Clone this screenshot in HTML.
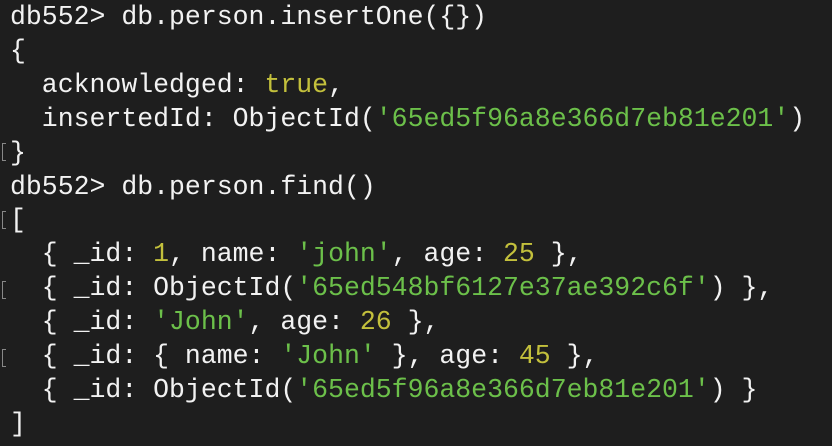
<!DOCTYPE html>
<html><head><style>
html,body{margin:0;padding:0;background:#1e1e1e;width:832px;height:446px;overflow:hidden}
pre{margin:0;position:absolute;left:10px;top:1px;font-family:"Liberation Mono",monospace;font-size:26.5px;line-height:33.9px;color:#f2f2f2;letter-spacing:0}
.y{color:#c3c03c}.g{color:#6cc04a}
.m{position:absolute;left:2px;width:4px;height:18px;border:1.5px solid #888;border-right:none;box-sizing:border-box}
</style></head><body>
<div class="m" style="top:143px"></div>
<div class="m" style="top:211px"></div>
<div class="m" style="top:281px"></div>
<div class="m" style="top:349px"></div>
<pre>db552&gt; db.person.insertOne({})
{
  acknowledged: <span class="y">true</span>,
  insertedId: ObjectId(<span class="g">'65ed5f96a8e366d7eb81e201'</span>)
}
db552&gt; db.person.find()
[
  { _id: <span class="y">1</span>, name: <span class="g">'john'</span>, age: <span class="y">25</span> },
  { _id: ObjectId(<span class="g">'65ed548bf6127e37ae392c6f'</span>) },
  { _id: <span class="g">'John'</span>, age: <span class="y">26</span> },
  { _id: { name: <span class="g">'John'</span> }, age: <span class="y">45</span> },
  { _id: ObjectId(<span class="g">'65ed5f96a8e366d7eb81e201'</span>) }
]</pre>
</body></html>
